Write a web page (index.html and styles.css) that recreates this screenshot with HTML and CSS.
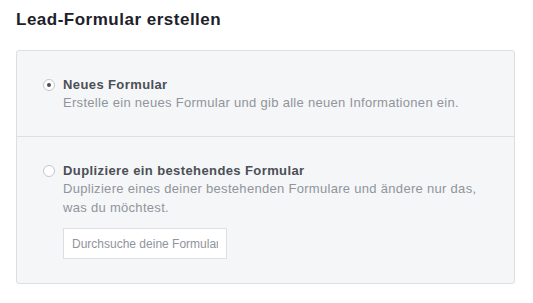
FILE: index.html
```html
<!DOCTYPE html>
<html lang="de">
<head>
<meta charset="UTF-8">
<meta name="viewport" content="width=device-width, initial-scale=1.0">
<title>Lead-Formular erstellen</title>
<link rel="stylesheet" href="styles.css">
</head>
<body>
    <!-- Heading -->
    <h1 class="title">Lead-Formular erstellen</h1>

    <div class="panel">
        <!-- Option: new form -->
        <div class="option">
            <span class="radio checked"></span>
            <div class="option-body">
                <div class="option-title">Neues Formular</div>
                <div class="option-desc">Erstelle ein neues Formular und gib alle neuen Informationen ein.</div>
            </div>
        </div>

        <!-- Option: duplicate form -->
        <div class="option">
            <span class="radio"></span>
            <div class="option-body">
                <div class="option-title">Dupliziere ein bestehendes Formular</div>
                <div class="option-desc">Dupliziere eines deiner bestehenden Formulare und ändere nur das, was du möchtest.</div>
                <input class="search" type="text" placeholder="Durchsuche deine Formulare">
            </div>
        </div>
    </div>
</body>
</html>
```
FILE: styles.css
```css
/* General formatting */
body {
    font-family: "Liberation Sans", Arial, sans-serif;
    background-color: #ffffff;
    margin: 0;
    padding: 10px 18px 0 16px;
}

.title {
    font-size: 17px;
    font-weight: bold;
    color: #1d2129;
    line-height: 20px;
    letter-spacing: 0.5px;
    margin: 0 0 20px 0;
}

/* Grey box holding the options */
.panel {
    width: 499px;
    box-sizing: border-box;
    background-color: #f5f6f7;
    border: 1px solid #dddfe2;
    border-radius: 3px;
}

.option {
    display: flex;
    gap: 8px;
    padding: 26px 26px 24px 26px;
}

.option + .option {
    border-top: 1px solid #dddfe2;
}

.radio {
    flex: none;
    width: 12px;
    height: 12px;
    margin-top: 2px;
    border: 1px solid #c4c7cc;
    border-radius: 50%;
    background-color: #ffffff;
    box-sizing: border-box;
    display: flex;
    align-items: center;
    justify-content: center;
}

.radio.checked::after {
    content: "";
    width: 4px;
    height: 4px;
    border-radius: 50%;
    background-color: #4b4f56;
}

.option-title {
    font-size: 13px;
    font-weight: bold;
    color: #4b4f56;
    line-height: 16px;
    letter-spacing: 0.4px;
}

.option-desc {
    font-size: 13px;
    color: #90949c;
    line-height: 19px;
    letter-spacing: 0.3px;
}

/* Search field under the duplicate option */
.search {
    display: block;
    width: 164px;
    height: 31px;
    box-sizing: border-box;
    margin-top: 11px;
    padding: 0 8px;
    border: 1px solid #dddfe2;
    background-color: #ffffff;
    font-family: "Liberation Sans", Arial, sans-serif;
    font-size: 12px;
    color: #4b4f56;
    outline: none;
}

.search::placeholder {
    color: #90949c;
}
```
